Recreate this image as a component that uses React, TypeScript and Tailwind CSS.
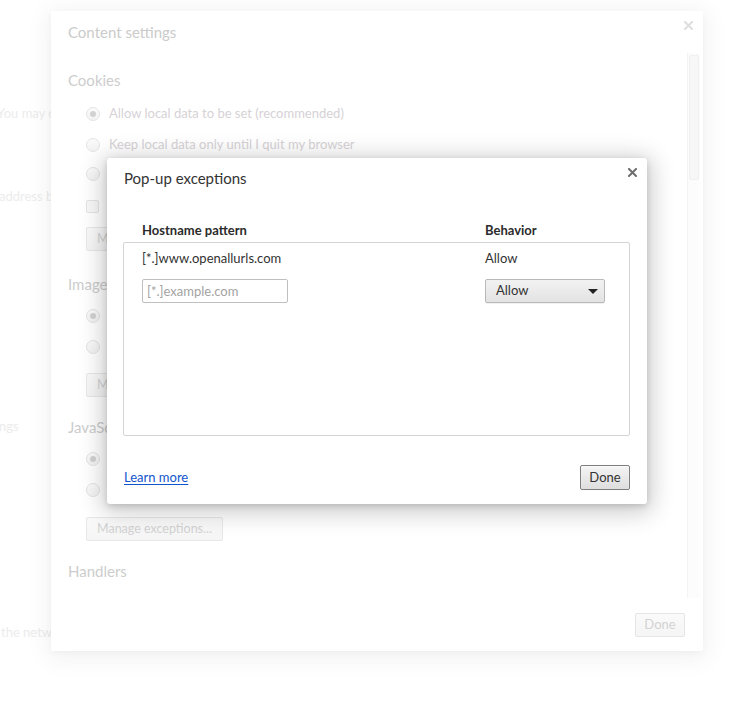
import React from 'react';

const Radio: React.FC<{ checked?: boolean }> = ({ checked }) => (
  <span className="w-[14px] h-[14px] rounded-full border border-[#e4e4e4] bg-gradient-to-b from-[#fbfbfb] to-[#f3f3f3] flex items-center justify-center shrink-0">
    {checked && <span className="w-[6px] h-[6px] rounded-full bg-[#d2d2d2]" />}
  </span>
);

const FadedOption: React.FC<{ label: string; checked?: boolean; box?: boolean; className?: string }> = ({ label, checked, box, className }) => (
  <div className={`h-[20px] flex items-center pl-[18px] ${className ?? ''}`}>
    {box ? (
      <span className="w-[13px] h-[13px] rounded-[2px] border border-[#e4e4e4] bg-[#f8f8f8] shrink-0" />
    ) : (
      <Radio checked={checked} />
    )}
    <span className="ml-[9px] text-[13px] text-[#d6d2d6] whitespace-nowrap">{label}</span>
  </div>
);

const FadedButton: React.FC<{ label: string; className?: string }> = ({ label, className }) => (
  <div className={`flex pl-[18px] ${className ?? ''}`}>
    <button className="h-[24px] px-[10px] rounded-[2px] border border-[#e8e8e8] bg-gradient-to-b from-[#fafafa] to-[#f5f5f5] text-[12.5px] text-[#d3d3d3] whitespace-nowrap">
      {label}
    </button>
  </div>
);

const SectionTitle: React.FC<{ title: string; className?: string }> = ({ title, className }) => (
  <h3 className={`h-[20px] leading-[20px] text-[15px] text-[#cdcdcd] ${className ?? ''}`}>{title}</h3>
);

const CloseIcon: React.FC<{ color: string }> = ({ color }) => (
  <svg viewBox="0 0 9 9" className="w-[9px] h-[9px]">
    <path d="M1 1L8 8M8 1L1 8" stroke={color} strokeWidth="2" strokeLinecap="square" />
  </svg>
);

const ContentSettings: React.FC = () => (
  <div className="absolute left-[51px] top-[11px] w-[652px] h-[640px] bg-white rounded-[2px] shadow-[0_4px_23px_5px_rgba(0,0,0,0.05),0_2px_6px_rgba(0,0,0,0.03)] flex flex-col">
    <div className="h-[42px] pl-[17px] pt-[11px] relative">
      <h1 className="text-[15px] leading-[20px] text-[#cbcbcb]">Content settings</h1>
      <span className="absolute right-[10px] top-[10px]">
        <CloseIcon color="#dedede" />
      </span>
    </div>
    <div className="h-[545px] flex overflow-hidden">
      <div className="flex-1 pl-[17px] pt-[17px] overflow-hidden">
        <SectionTitle title="Cookies" />
        <FadedOption checked label="Allow local data to be set (recommended)" className="mt-[14px]" />
        <FadedOption label="Keep local data only until I quit my browser" className="mt-[11px]" />
        <FadedOption label="Block sites from setting any data" className="mt-[9px]" />
        <FadedOption box label="Block third-party cookies and site data" className="mt-[12px]" />
        <FadedButton label="Manage exceptions..." className="mt-[11px]" />
        <SectionTitle title="Images" className="mt-[23px]" />
        <FadedOption checked label="Show all images (recommended)" className="mt-[12px]" />
        <FadedOption label="Do not show any images" className="mt-[11px]" />
        <FadedButton label="Manage exceptions..." className="mt-[16px]" />
        <SectionTitle title="JavaScript" className="mt-[20px]" />
        <FadedOption checked label="Allow all sites to run JavaScript (recommended)" className="mt-[12px]" />
        <FadedOption label="Do not allow any site to run JavaScript" className="mt-[11px]" />
        <FadedButton label="Manage exceptions..." className="mt-[17px]" />
        <SectionTitle title="Handlers" className="mt-[20px]" />
        <FadedOption label="Allow sites to ask to become default handlers for protocols" className="mt-[15px]" />
      </div>
      <div className="w-[13px] mr-[3px] border-l border-[#f4f4f4] bg-[#fcfcfc] pt-[2px] px-[1px]">
        <div className="h-[125px] rounded-[2px] border border-[#f0f0f0] bg-[#f7f7f7]" />
      </div>
    </div>
    <div className="flex-1 flex justify-end items-start pt-[15px] pr-[18px]">
      <button className="w-[50px] h-[24px] rounded-[2px] border border-[#e6e6e6] bg-gradient-to-b from-[#fafafa] to-[#f5f5f5] text-[13px] text-[#d3d3d3]">
        Done
      </button>
    </div>
  </div>
);

const PopupExceptions: React.FC = () => (
  <div className="absolute left-[107px] top-[158px] w-[540px] h-[346px] bg-white rounded-[3px] shadow-[0_4px_23px_5px_rgba(0,0,0,0.2),0_2px_6px_rgba(0,0,0,0.15)] px-[16px] flex flex-col">
    <span className="absolute right-[10px] top-[10px]">
      <CloseIcon color="#6f6f6f" />
    </span>
    <div className="h-[63px] pt-[10px] pl-[1px]">
      <h2 className="text-[15px] leading-[20px] text-[#333]">Pop-up exceptions</h2>
    </div>
    <div className="h-[20px] grid grid-cols-[343px_1fr] pl-[19px] items-center text-[13px] font-bold text-[#2b2b2b]">
      <span>Hostname pattern</span>
      <span>Behavior</span>
    </div>
    <div className="mt-[1px] h-[194px] w-[507px] border border-[#d4d4d4] rounded-[2px] pl-[18px] pt-[6px]">
      <div className="h-[20px] grid grid-cols-[343px_1fr] items-center text-[13px] text-[#333]">
        <span>[*.]www.openallurls.com</span>
        <span>Allow</span>
      </div>
      <div className="mt-[10px] grid grid-cols-[343px_1fr] items-center">
        <input
          placeholder="[*.]example.com"
          className="w-[146px] h-[24px] border border-[#bfbfbf] rounded-[2px] px-[4px] text-[13px] text-[#333] placeholder:text-[#a3a3a3] outline-none"
        />
        <div className="w-[120px] h-[24px] rounded-[2px] border border-[#b9b9b9] bg-gradient-to-b from-[#f2f2f2] to-[#e3e3e3] shadow-[0_1px_0_rgba(0,0,0,0.06)] flex items-center justify-between pl-[10px] pr-[6px] text-[13px] text-[#333]">
          <span>Allow</span>
          <svg viewBox="0 0 10 5" className="w-[10px] h-[5px]">
            <path d="M0 0H10L5 5Z" fill="#222" />
          </svg>
        </div>
      </div>
    </div>
    <div className="mt-[29px] h-[25px] w-[507px] flex items-center justify-between pl-[1px]">
      <a href="#" className="text-[13px] text-[#1155cc] underline underline-offset-[2px]">Learn more</a>
      <button className="w-[50px] h-[25px] rounded-[2px] border border-[#7e7e7e] bg-gradient-to-b from-[#f4f4f4] to-[#dedede] shadow-[inset_0_1px_2px_rgba(255,255,255,0.75)] text-[13px] text-[#333]">
        Done
      </button>
    </div>
  </div>
);

export default function App() {
  return (
    <div className="relative w-[754px] h-[701px] bg-white overflow-hidden font-['Lato',sans-serif]">
      <div className="text-[13px] text-[#ececec] whitespace-nowrap">
        <p className="mt-[103px] -ml-[3px] leading-[20px]">You may change settings that control how your browser works</p>
        <p className="mt-[63px] -ml-[1px] leading-[20px]">address bar</p>
        <p className="mt-[210px] -ml-[27px] leading-[20px]">Settings</p>
        <p className="mt-[186px] ml-[1px] leading-[20px]">the network</p>
      </div>
      <ContentSettings />
      <PopupExceptions />
    </div>
  );
}
